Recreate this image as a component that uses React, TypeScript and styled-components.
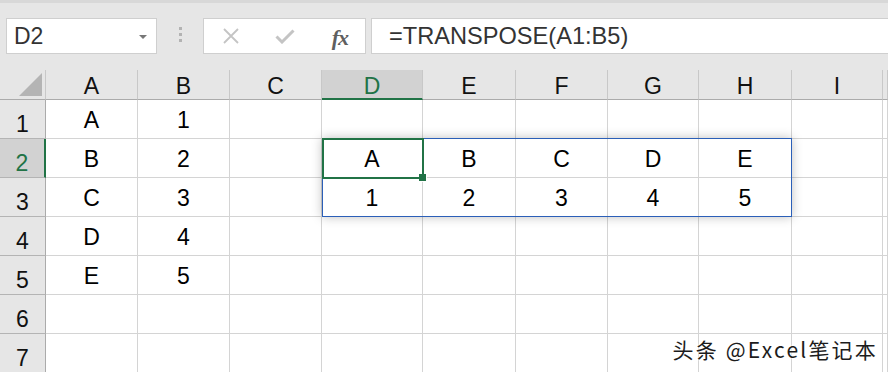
import React from 'react';
import styled, { createGlobalStyle } from 'styled-components';

const GlobalStyle = createGlobalStyle`
  html, body {
    margin: 0;
    padding: 0;
    background: #ffffff;
    overflow: hidden;
  }
  body {
    font-family: "Liberation Sans", Arial, sans-serif;
  }
`;

const COLS = ['A', 'B', 'C', 'D', 'E', 'F', 'G', 'H', 'I'];
const COL_WIDTHS = [92, 92, 92, 101, 93, 92, 91, 93, 91];
const ROW_HEADER_W = 46;
const ROW_H = 39;
const HEADER_H = 30;

const data: Record<string, string> = {
  A1: 'A', B1: '1',
  A2: 'B', B2: '2',
  A3: 'C', B3: '3',
  A4: 'D', B4: '4',
  A5: 'E', B5: '5',
  D2: 'A', E2: 'B', F2: 'C', G2: 'D', H2: 'E',
  D3: '1', E3: '2', F3: '3', G3: '4', H3: '5',
};

const gridTemplate = `${ROW_HEADER_W}px ${COL_WIDTHS.map((w) => `${w}px`).join(' ')} 1fr`;

const Page = styled.div`
  width: 888px;
  height: 372px;
  position: relative;
  overflow: hidden;
  background: #ffffff;
`;

const Toolbar = styled.div`
  height: 70px;
  box-sizing: border-box;
  background: #e6e6e6;
  border-top: 3px solid #d8d8d8;
  padding: 15px 0 0 6px;
  display: flex;
  align-items: flex-start;
`;

const Box = styled.div`
  height: 36px;
  box-sizing: border-box;
  background: #ffffff;
  border: 1px solid #cfcfcf;
  display: flex;
  align-items: center;
`;

const NameBox = styled(Box)`
  width: 151px;
  padding: 0 9px 0 7px;
  justify-content: space-between;
  font-size: 23px;
  color: #333333;
`;

const DropArrow = styled.span`
  width: 0;
  height: 0;
  border-left: 4px solid transparent;
  border-right: 4px solid transparent;
  border-top: 4px solid #777777;
  margin-top: 2px;
`;

const Grip = styled.div`
  width: 46px;
  height: 36px;
  display: flex;
  flex-direction: column;
  align-items: center;
  justify-content: center;
  gap: 3px;
  padding-bottom: 4px;
  box-sizing: border-box;
`;

const GripDot = styled.span`
  width: 3px;
  height: 3px;
  background: #b3b3b3;
`;

const IconBox = styled(Box)`
  width: 163px;
  padding: 0 17px 0 19px;
  justify-content: space-between;
`;

const FxText = styled.span`
  font-family: "Liberation Serif", "Times New Roman", serif;
  font-style: italic;
  font-weight: bold;
  font-size: 22px;
  color: #5f5f5f;
  letter-spacing: -1px;
  margin-top: 4px;
`;

const FormulaBox = styled(Box)`
  flex: 1;
  margin-left: 5px;
  margin-right: -4px;
  padding-left: 17px;
  font-size: 23.6px;
  color: #333333;
`;

const Sheet = styled.div`
  position: relative;
  display: grid;
  grid-template-columns: ${gridTemplate};
  grid-auto-rows: ${ROW_H}px;
  grid-template-rows: ${HEADER_H}px;
`;

const Corner = styled.div`
  background: #e6e6e6;
  border-right: 1px solid #c8c8c8;
  border-bottom: 1px solid #ababab;
  box-sizing: border-box;
  display: flex;
  align-items: flex-end;
  justify-content: flex-end;
  padding: 0 3px 3px 0;
`;

const CornerTriangle = styled.span`
  width: 0;
  height: 0;
  border-left: 23px solid transparent;
  border-bottom: 23px solid #b4b4b4;
`;

const ColHeader = styled.div<{ $active?: boolean }>`
  box-sizing: border-box;
  background: ${(p) => (p.$active ? '#d2d2d2' : '#e6e6e6')};
  border-right: 1px solid #c8c8c8;
  border-bottom: ${(p) => (p.$active ? '2px solid #217346' : '1px solid #ababab')};
  color: ${(p) => (p.$active ? '#217346' : '#111111')};
  font-size: 23px;
  line-height: 1;
  display: flex;
  align-items: center;
  justify-content: center;
  padding-top: ${(p) => (p.$active ? '4px' : '3px')};
`;

const RowHeader = styled.div<{ $active?: boolean }>`
  box-sizing: border-box;
  background: ${(p) => (p.$active ? '#d2d2d2' : '#e6e6e6')};
  border-right: ${(p) => (p.$active ? '2px solid #217346' : '1px solid #ababab')};
  border-bottom: 1px solid #b4b4b4;
  color: ${(p) => (p.$active ? '#217346' : '#111111')};
  font-size: 23px;
  line-height: 1;
  display: flex;
  align-items: center;
  justify-content: center;
  padding-top: 11px;
`;

const Cell = styled.div`
  box-sizing: border-box;
  border-right: 1px solid #d4d4d4;
  border-bottom: 1px solid #d4d4d4;
  color: #000000;
  font-size: 23px;
  line-height: 1;
  display: flex;
  align-items: center;
  justify-content: center;
  padding-top: 3px;
`;

const Selection = styled.div`
  position: absolute;
  left: 322px;
  top: 68px;
  width: 470px;
  height: 79px;
  box-sizing: border-box;
  border: 1px solid #2b5fb8;
  box-shadow: 0 0 10px rgba(0, 0, 0, 0.25);
  pointer-events: none;
`;

const ActiveCell = styled.div`
  position: absolute;
  left: 322px;
  top: 68px;
  width: 102px;
  height: 41px;
  box-sizing: border-box;
  border: 2px solid #217346;
  pointer-events: none;
`;

const FillHandle = styled.span`
  position: absolute;
  right: -5px;
  bottom: -5px;
  width: 7px;
  height: 7px;
  background: #217346;
  border: 1px solid #ffffff;
  border-top: none;
  border-left: none;
`;

const Watermark = styled.div`
  position: absolute;
  right: 10px;
  bottom: 12px;
  font-family: "Noto Sans CJK SC", "Liberation Sans", sans-serif;
  font-size: 21px;
  line-height: 22px;
  letter-spacing: 2.2px;
  color: #1c1c1c;
  text-shadow: 0 0 2px #ffffff, 0 0 2px #ffffff, 0 0 3px #ffffff;
`;

const CancelIcon = () => (
  <svg width="16" height="16" viewBox="0 0 16 16">
    <path d="M1 1 L15 15 M15 1 L1 15" stroke="#c4c4c4" strokeWidth="1.8" fill="none" />
  </svg>
);

const EnterIcon = () => (
  <svg width="20" height="15" viewBox="0 0 20 15">
    <path d="M1.5 7.5 L7 13 L18.5 1.5" stroke="#c4c4c4" strokeWidth="3" fill="none" />
  </svg>
);

const ROWS = [1, 2, 3, 4, 5, 6, 7];

export default function App() {
  return (
    <>
      <GlobalStyle />
      <Page>
        <Toolbar>
          <NameBox>
            <span>D2</span>
            <DropArrow />
          </NameBox>
          <Grip>
            <GripDot />
            <GripDot />
            <GripDot />
          </Grip>
          <IconBox>
            <CancelIcon />
            <EnterIcon />
            <FxText>fx</FxText>
          </IconBox>
          <FormulaBox>=TRANSPOSE(A1:B5)</FormulaBox>
        </Toolbar>
        <Sheet>
          <Corner>
            <CornerTriangle />
          </Corner>
          {COLS.map((c) => (
            <ColHeader key={c} $active={c === 'D'}>
              {c}
            </ColHeader>
          ))}
          <ColHeader />
          {ROWS.map((r) => (
            <React.Fragment key={r}>
              <RowHeader $active={r === 2}>{r}</RowHeader>
              {COLS.map((c) => (
                <Cell key={c + r}>{data[c + r] ?? ''}</Cell>
              ))}
              <Cell />
            </React.Fragment>
          ))}
          <Selection />
          <ActiveCell>
            <FillHandle />
          </ActiveCell>
        </Sheet>
        <Watermark>头条 @Excel笔记本</Watermark>
      </Page>
    </>
  );
}
